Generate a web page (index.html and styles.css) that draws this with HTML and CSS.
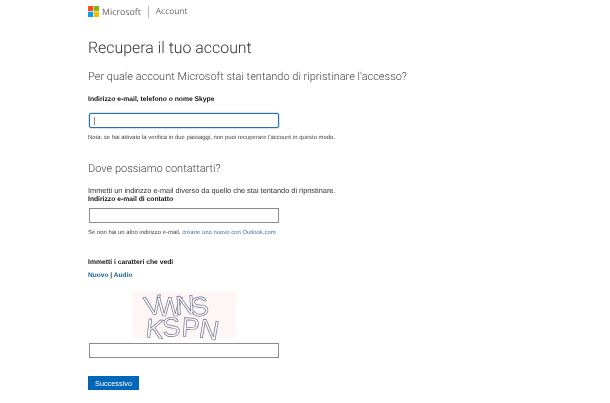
FILE: index.html
```html
<!DOCTYPE html>
<html lang="it">
<head>
<meta charset="utf-8">
<title>Recupera il tuo account</title>
<link rel="stylesheet" href="styles.css">
</head>
<body>
<header class="brand">
  <svg class="logo" viewBox="0 0 11 11" width="11" height="11" aria-hidden="true">
    <rect x="0" y="0" width="5.2" height="5.2" fill="#f25022"/>
    <rect x="5.8" y="0" width="5.2" height="5.2" fill="#7fba00"/>
    <rect x="0" y="5.8" width="5.2" height="5.2" fill="#00a4ef"/>
    <rect x="5.8" y="5.8" width="5.2" height="5.2" fill="#ffb900"/>
  </svg>
  <span class="brand-name">Microsoft</span>
  <span class="brand-sep"></span>
  <span class="brand-sub">Account</span>
</header>
<main class="content">
  <h1 class="title">Recupera il tuo account</h1>
  <h2 class="subtitle first">Per quale account Microsoft stai tentando di ripristinare l'accesso?</h2>
  <label class="label first-label">Indirizzo e-mail, telefono o nome Skype</label>
  <div class="field focused"><span class="caret"></span></div>
  <p class="note">Nota: se hai attivato la verifica in due passaggi, non puoi recuperare l'account in questo modo.</p>
  <h2 class="subtitle second">Dove possiamo contattarti?</h2>
  <p class="body-text">Immetti un indirizzo e-mail diverso da quello che stai tentando di ripristinare.</p>
  <label class="label">Indirizzo e-mail di contatto</label>
  <div class="field contact"></div>
  <p class="note">Se non hai un altro indirizzo e-mail, <a class="note-link">creane uno nuovo con Outlook.com</a></p>
  <label class="label captcha-label">Immetti i caratteri che vedi</label>
  <div class="captcha-links"><a>Nuovo</a> <span>|</span> <a>Audio</a></div>
  <div class="captcha">
    <svg viewBox="0 0 104 46" width="104" height="46" role="img" aria-label="captcha">
      <text class="cap" x="14 25 44 60 13 31 49 66" y="24 24 23 25 45 45 44 45" rotate="-10 0 -4 -8 6 -4 4 10">VWNSKSPN</text>
    </svg>
  </div>
  <div class="field captcha-field"></div>
  <button class="next" type="button">Successivo</button>
</main>
</body>
</html>
```
FILE: styles.css
```css
html, body { margin: 0; padding: 0; background: #fff; }
body { width: 610px; height: 403px; overflow: hidden; font-family: "Liberation Sans", Arial, sans-serif; color: #1a1a1a; text-rendering: geometricPrecision; }
.brand { display: flex; align-items: center; height: 12px; padding: 5.5px 0 0 88px; filter: blur(0.3px); }
.logo { display: block; }
.brand-name { margin-left: 3px; font: 400 8.8px/12px "Open Sans", sans-serif; color: #666; }
.brand-sep { width: 1px; height: 12px; background: #bbb; margin: 0 7px; }
.brand-sub { font: 400 8.4px/12px "Open Sans", sans-serif; color: #666; }
.content { padding-left: 88px; filter: blur(0.3px); }
.title { margin: 20.5px 0 0; font: 300 15.9px/20px Roboto, sans-serif; color: #333; }
.subtitle { margin: 0; font: 300 11px/14px Roboto, sans-serif; color: #444; }
.subtitle.first { margin-top: 12px; }
.subtitle.second { margin-top: 20.5px; }
.label { display: block; font-size: 6.75px; line-height: 9px; font-weight: 700; color: #111; }
.first-label { margin-top: 10.5px; }
.field { box-sizing: border-box; width: 190px; height: 15px; margin-left: 1px; border: 1px solid #8c8c8c; background: #fff; display: flex; align-items: center; padding-left: 4px; }
.field.focused { margin-top: 9.5px; border: 1px solid #2a6fb0; border-radius: 2px; box-shadow: 0 0 1.5px #2a78c0; }
.caret { width: 1px; height: 8px; background: #888; }
.note { margin: 5.5px 0 0; font-size: 5.93px; line-height: 8px; color: #444; }
.body-text { margin: 10px 0 0; font-size: 7.37px; line-height: 9px; color: #333; }
.field.contact { margin-top: 4px; }
.note-link { color: #3a76ab; }
.captcha-label { margin-top: 21px; }
.captcha-links { margin-top: 4.5px; font-size: 6.6px; line-height: 9px; font-weight: 700; color: #333; }
.captcha-links a { color: #0f5f9e; }
.captcha { width: 104px; height: 46px; margin: 12px 0 0 44px; background: #fdf6f4; }
.captcha svg { display: block; overflow: visible; }
.cap { font: 400 27px "Liberation Sans", sans-serif; fill: #fff; stroke: #6f7390; stroke-width: 0.7; }
.field.captcha-field { margin-top: 5px; }
.next { display: block; margin-top: 18px; width: 51px; height: 14px; padding: 0; border: 0; background: #0067b8; color: #fff; font: 400 7.3px "Liberation Sans", sans-serif; }
```
